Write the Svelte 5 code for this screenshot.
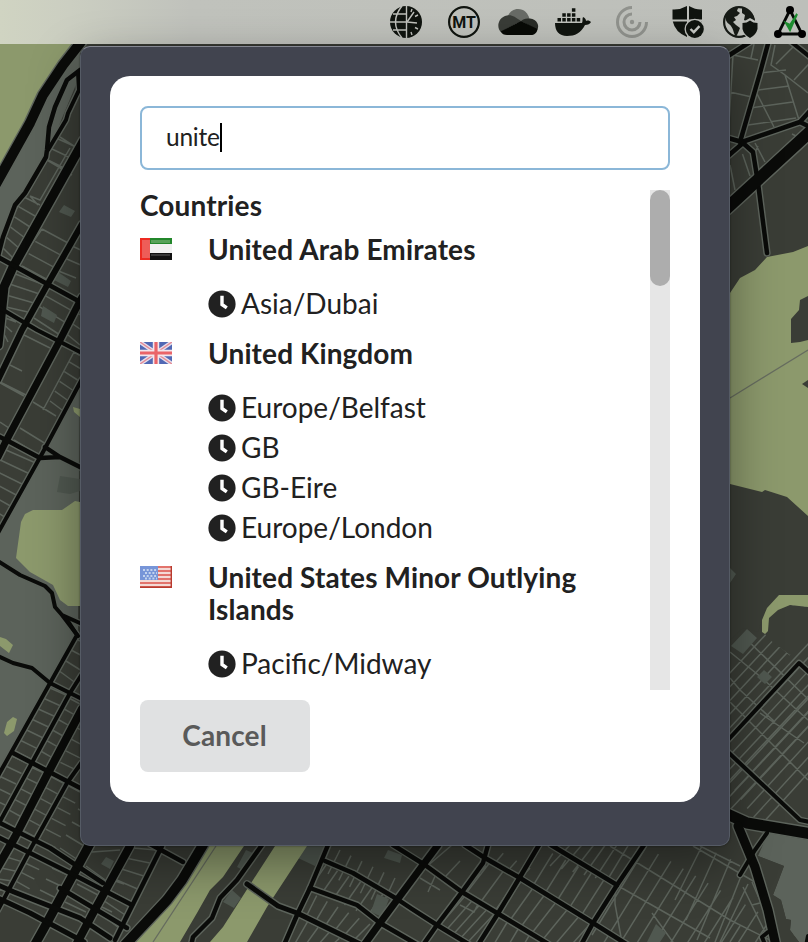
<script>
  const countries = [
    { name: 'United Arab Emirates', flag: 'ae', zones: ['Asia/Dubai'] },
    { name: 'United Kingdom', flag: 'gb', zones: ['Europe/Belfast', 'GB', 'GB-Eire', 'Europe/London'] },
    { name: 'United States Minor Outlying Islands', flag: 'us', zones: ['Pacific/Midway'] }
  ];

  // Evenly spaced streets running between edge a-b and edge c-d
  function ladder([ax, ay, bx, by, cx, cy, dx, dy, n]) {
    let d = '';
    for (let i = 0; i <= n; i++) {
      const t = i / n;
      d += `M${(ax + (bx - ax) * t).toFixed(1)} ${(ay + (by - ay) * t).toFixed(1)}L${(cx + (dx - cx) * t).toFixed(1)} ${(cy + (dy - cy) * t).toFixed(1)}`;
    }
    return d;
  }

  const streets = [
    // upper west blocks
    [22, 196, 3, 248, 40, 205, 15, 260, 5],
    [46, 159, 56, 138, 66, 169, 76, 147, 2],
    [42, 229, 22, 266, 68, 243, 48, 280, 3],
    [10, 272, 2, 318, 42, 284, 26, 322, 4],
    [50, 284, 34, 318, 77, 298, 60, 335, 3],
    [76, 232, 56, 270, 92, 240, 76, 278, 3],
    [24, 335, 0, 382, 50, 348, 26, 395, 1],
    [74, 352, 50, 401, 88, 360, 62, 410, 5],
    [20, 428, 14, 440, 46, 444, 40, 456, 1],
    [0, 316, 0, 326, 16, 322, 8, 342, 2],
    [6, 450, -26, 512, 38, 464, 2, 530, 6],
    [76, 300, 62, 330, 100, 310, 80, 345, 3],
    // lower west blocks
    [78, 640, 54, 682, 96, 648, 68, 694, 4],
    [50, 688, 15, 751, 66, 695, 31, 759, 6],
    [69, 698, 34, 761, 80, 704, 46, 768, 6],
    [82, 716, 55, 774, 100, 726, 68, 780, 5],
    [12, 756, -22, 818, 27, 763, -6, 826, 6],
    [31, 767, 2, 820, 44, 773, 16, 828, 5],
    [50, 776, 22, 830, 65, 784, 37, 838, 5],
    [69, 786, 40, 840, 80, 792, 56, 848, 5],
    [84, 796, 60, 848, 106, 806, 78, 860, 4],
    [12, 846, -20, 900, 27, 852, 0, 900, 5],
    [30, 854, 8, 900, 44, 860, 20, 908, 5],
    [52, 868, 28, 912, 70, 876, 44, 921, 4],
    [92, 852, 86, 866, 120, 850, 108, 882, 1],
    [133, 848, 96, 910, 156, 850, 119, 928, 6],
    [77, 884, 65, 902, 98, 895, 86, 912, 2],
    [112, 880, 98, 905, 124, 884, 112, 912, 2],
    // southern blocks
    [340, 850, 395, 878, 328, 874, 382, 906, 5],
    [326, 865, 395, 899, 310, 888, 379, 922, 6],
    [306, 890, 370, 924, 296, 914, 350, 944, 6],
    [297, 916, 350, 944, 285, 942, 330, 958, 5],
    [440, 848, 480, 874, 427, 865, 463, 889, 2],
    [452, 845, 486, 866, 425, 868, 459, 892, 1],
    [491, 861, 518, 878, 467, 892, 495, 911, 2],
    [490, 846, 530, 868, 480, 858, 520, 879, 3],
    [465, 896, 495, 913, 440, 925, 468, 942, 4],
    [540, 847, 617, 886, 521, 878, 594, 922, 6],
    [522, 880, 591, 923, 499, 914, 565, 952, 6],
    [572, 843, 640, 845, 550, 866, 618, 884, 6],
    [646, 847, 820, 948, 592, 935, 760, 1040, 14],
    [496, 916, 564, 952, 480, 942, 550, 978, 6],
    // north east
    [733, 55, 762, 60, 728, 140, 738, 142, 1],
    [760, 73, 748, 125, 786, 70, 796, 118, 3],
    [776, 64, 812, 96, 796, 44, 830, 75, 2],
    [730, 165, 755, 143, 735, 190, 765, 162, 2],
    [758, 146, 792, 134, 753, 157, 800, 138, 1],
    // south east grid
    [728, 675, 728, 812, 812, 585, 812, 722, 10],
    [728, 782, 760, 826, 812, 692, 840, 738, 5],
    [702, 846, 745, 866, 675, 900, 708, 960, 3]
  ];

  const minor = [
    'M42 157L72 175M60 137L80 150M70 148L40 200L30 196M38 205L30 196',
    'M22 258L42 229M10 365L22 371M0 383L24 396M33 402L56 416M74 352L43 410M0 422L12 430',
    'M730 92L756 98M754 44L751 58M733 55L758 60M775 45L771 65L785 75L799 120M785 75L808 93M753 86L774 127',
    'M615 885L615 904L621 937M652 913L675 945',
    'M610 846L730 920L790 950M620 887L710 938M693 846L760 885M700 846L740 866',
    'M730 652L762 678L808 720M743 636L808 699M730 702L808 780M768 635L790 655M760 713L804 743M730 678L740 690L775 722',
    'M743 887L765 932M752 882L762 905M748 884L720 942M752 905L760 903M740 926L730 942',
    'M425 868L459 888M420 878L440 890M436 874L428 892M460 905L474 912L480 900'
  ];

  const roads = [
    [10, 'M81 42L63 65L43 95L30 123L-4 184'],
    [4.5, 'M80 70L67 80L55 107L49 127L47 150L46 157L25 193L15 205L3 237L-2 256'],
    [4, 'M78 73L79 90L68 113L66 120L48 150'],
    [9, 'M84 140L13 267L4 287L-2 345'],
    [6, 'M82 224L50 280L22 330L-2 380'],
    [7, 'M82 297L60 340L5 443L-2 457'],
    [4, 'M82 379L43 452L-2 533'],
    [4.5, 'M-2 257L82 303'],
    [4, 'M-2 307L37 330L82 353'],
    [4.5, 'M-2 436L10 442L40 458L60 457L82 468M45 447L60 457'],
    [4, 'M-2 561L20 575L45 586L52 593L55 607L62 615L82 624M62 615L78 636'],
    [4, 'M-2 656L13 663L32 668L50 683L84 700'],
    [4, 'M66 618L77 635L-2 776'],
    [4, 'M82 674L70 693L-2 825'],
    [8, 'M82 709L48 773L15 837L-4 870'],
    [4, 'M82 762L67 783L30 850L-2 910'],
    [4.5, 'M13 753L84 790'],
    [9, 'M92 840L43 930L34 946'],
    [4.5, 'M-2 822L20 833L50 848L103 883'],
    [4.5, 'M-2 837L80 878L132 905'],
    [5, 'M-2 898L30 913L84 942M-2 885L14 892L80 918L110 938'],
    [8, 'M130 846L93 913L76 945'],
    [4.5, 'M162 846L115 940M150 844L183 862'],
    [4.5, 'M60 888L127 928'],
    [10, 'M203 845L182 880L167 900L125 945'],
    [4.5, 'M262 845L237 880L220 898L212 918L193 937L191 946'],
    [5, 'M247 884L278 906L297 913L360 944'],
    [4.5, 'M328 845L310 888L297 915L284 945'],
    [4.5, 'M325 861L353 873L397 899L412 909L437 925L470 945'],
    [4.5, 'M310 888L357 905L380 923L418 945'],
    [7, 'M438 845L423 865L380 923L364 945'],
    [4.5, 'M393 845L425 865L462 892L497 913L550 945'],
    [4.5, 'M465 845L485 858L520 878L593 923L628 945'],
    [4.5, 'M551 845L617 885'],
    [4.5, 'M644 845L617 885L593 923L581 945'],
    [4.5, 'M539 845L520 877L497 915L478 945'],
    [4.5, 'M488 845L483 863L462 892L437 925L423 945'],
    [4.5, 'M769 40L760 73L740 142M750 42L728 56'],
    [4.5, 'M728 138L742 142L800 122L810 111M743 143L728 156M800 122L810 127'],
    [4.5, 'M743 143L753 152L758 183L767 253'],
    [12, 'M812 130L726 209'],
    [4, 'M790 41L810 57'],
    [4, 'M728 740L799 663L810 673'],
    [4, 'M728 752L800 820L810 822'],
    [11, 'M725 813L747 823L812 834'],
    [9, 'M738 826L755 867L768 910L776 946'],
    [4, 'M767 833L755 850L740 875'],
    [4, 'M764 942L762 937L768 932M806 946L808 936']
  ];
</script>

<div class="desktop">
  <svg class="map" width="808" height="942" viewBox="0 0 808 942" aria-hidden="true">
    <rect width="808" height="942" fill="#3a3d36" />
    <path d={streets.map(ladder).join('') + minor.join('')} fill="none" stroke="#5d645c" stroke-width="1.5" />
    <g fill="#5c635b">
      <path d="M0 175L80 44L80 75L46 157L0 240Z" />
      <path d="M80 382L43 452L0 530V773L50 683L78 635Z" />
      <path d="M768 833L808 840V942H799L790 930L791 920L786 919L781 900L773 895L784 866L758 856Z" />
    </g>
    <g fill="#3a3d36">
      <path d="M730 215L808 146V250H730ZM730 480H808V600H780L765 610L758 632L743 628L730 640Z" />
      <path d="M765 634L768 631L769 618L778 610L790 605L808 607V634L790 655L770 640Z" />
      <path d="M758 856L784 866L773 895L781 900L786 919L791 920L790 930L799 942H776L768 910Z" />
      <path d="M203 846H328L285 942H140Z" />
    </g>
    <g fill="#505850">
      <path d="M64 205L75 211L71 217L59 212ZM58 272L71 281L68 287L54 280ZM43 306L57 315L54 323L41 316ZM60 476L80 479V491L70 494L57 492Z" />
      <path d="M106 857L114 861L110 869L101 864ZM303 846H325L315 866L298 858ZM246 850L253 853L243 870L237 867ZM232 890L241 898L234 908L223 902ZM388 850L402 855L400 863L384 858ZM377 894L389 899L382 917L371 912Z" />
      <path d="M747 629L757 638L743 654L731 646ZM764 670L772 677L765 684L757 677ZM730 568L736 574L730 583ZM656 924L666 933L660 942H647Z" />
    </g>
    <g fill="#8c996c">
      <path d="M0 44H72L55 68L38 95L25 123L0 170Z" />
      <path d="M33 510H62L75 501L80 502V606H68L60 600L53 585L30 572L16 558L21 522L25 514Z" />
      <path d="M73 407L80 409V417L74 412ZM0 637L6 639L13 645L9 653L0 646ZM13 717L17 719L14 731L7 736L4 733L7 722Z" />
      <path d="M205 846H244L223 877L210 890L197 913L180 942H135L168 902ZM275 846H307L267 907L247 942H210L223 927L253 880Z" />
      <path d="M730 293L740 278L755 270L767 257L793 252L808 246V296L800 300L799 310L791 319V343L800 342L808 340V380L802 384L808 388V516L787 497L765 490L762 492L730 484Z" />
      <path d="M808 595H779L767 608L762 620V632L765 634L768 631L769 618L778 610L790 605L808 607Z" />
    </g>
    <path d="M216 846L153 942M730 398L808 350" stroke="#666c5f" stroke-width="1.3" fill="none" />
    <g fill="none" stroke="#5d645c" stroke-linecap="round" stroke-linejoin="round">
      {#each roads as [w, d]}<path {d} stroke-width={w + 2.8} />{/each}
    </g>
    <g fill="none" stroke="#0a0b09" stroke-linecap="round" stroke-linejoin="round">
      {#each roads as [w, d]}<path {d} stroke-width={w} />{/each}
    </g>
  </svg>

  <header class="menubar">
    <svg width="32" height="32" viewBox="0 0 32 32">
      <circle cx="16" cy="16" r="16" fill="#10140f" />
      <g fill="none" stroke="#bfc0bb" stroke-width="1.4">
        <path d="M16.5 0V32M0 16H16M3 8H16M3 24H16M12 0Q-1 16 12 32" />
        <path d="M17 16L24 6M17 16L27 17M22 3L21 6M28 9L25 10.5M28 23L25 21.5M22 29L21 26" />
      </g>
    </svg>
    <svg class="mt" width="32" height="32" viewBox="0 0 32 32">
      <circle cx="16" cy="16" r="14.9" fill="none" stroke="#10140f" stroke-width="2.2" />
      <text x="16" y="21.6" text-anchor="middle">MT</text>
    </svg>
    <svg class="cloud" width="40" height="27" viewBox="0 0 40 27">
      <path d="M9 9C11 3 15 0 20 0C26 0 30 4 31.5 10L22 15Z" fill="#686b66" />
      <path d="M3 23C-2 19 0 8 9 6.5C14 5.5 17 8 23 12Z" fill="#393c37" />
      <path d="M23 12C26 9.500 29 9.500 32 9.500C39 10 42 17 39 21Z" fill="#292c27" />
      <path d="M2.500 22.500L23 12L39.500 20C39 24 36 26 33 26H9C6 26 4 25 2.500 22.500Z" fill="#080a06" />
    </svg>
    <svg class="docker" width="36" height="28" viewBox="0 0 36 28" fill="#10140f">
      <path d="M0 15H27C28 13 27 11 28 9C30 10 31 11 31 13C33 12 35 13 36 14C35 16 33 17 30 17C26 25 20 28 12 28C4 28 0 23 0 15Z" />
      <path d="M2.5 10H6V13.5H2.5ZM7.3 10H10.8V13.5H7.3ZM12.1 10H15.6V13.5H12.1ZM16.900 10H20.4V13.5H16.900ZM21.7 10H25.2V13.5H21.7ZM7.3 5.2H10.8V8.7H7.3ZM12.1 5.2H15.6V8.7H12.1ZM16.900 5.2H20.4V8.7H16.900ZM16.900 .3H20.4V3.8H16.900Z" />
    </svg>
    <svg class="swirl" width="32" height="32" viewBox="0 0 32 32">
      <circle cx="16" cy="16" r="2.2" fill="#90928d" />
      <path d="M16 1.5A14.5 14.5 0 1 0 30.5 16M16 8A8 8 0 1 0 24 16" fill="none" stroke="#90928d" stroke-width="3" />
    </svg>
    <svg class="shield" width="32" height="32" viewBox="0 0 32 32">
      <path d="M15 0Q8 4 .5 3.5V13.5H15ZM17 0Q24 4 30 3.5V13.5H17ZM.8 15.5H15V31Q3 26 .8 15.5ZM17 15.5H30L26 26L17 31Z" fill="#10140f" />
      <circle cx="22.8" cy="23" r="10.3" fill="#bdbfba" />
      <circle cx="22.8" cy="23" r="9" fill="#10140f" />
      <path d="M18.5 23L21.8 26.2L27.5 20.2" fill="none" stroke="#c5c7c2" stroke-width="2.4" />
    </svg>
    <svg class="earth" width="36" height="32" viewBox="0 0 36 32">
      <circle cx="17" cy="16" r="14.900" fill="none" stroke="#171b16" stroke-width="2.2" />
      <path d="M3 9L10 2L16 2L15 5L18 7L15 10L12 11L14 14L11 16L14 19L18 22L16 27L14 31C11 27 12 22 7 18C3 15 4 12 3 9ZM20 2C28 3 32 9 33 15L29 13L26 16L22 14L23 9L20 7Z" fill="#171b16" />
      <path d="M28 12L37 17V25Q34 31 28 33Q21 29 19 24V17Z" fill="#bdbfba" />
      <path d="M28 14.5Q31 17 35.5 17V23Q34 29 28 32Q22 29 20.5 23V17Q25 17 28 14.5Z" fill="#10140f" />
    </svg>
    <svg class="graph" width="32" height="32" viewBox="0 0 32 32">
      <path d="M16 4L4 28H28Z" fill="none" stroke="#050705" stroke-width="2.8" />
      <path d="M12 17L16 24L23 8L20 13L16 19Z" fill="#1c8c2e" stroke="#1c8c2e" stroke-width="2" />
      <circle cx="16" cy="4" r="4" /><circle cx="4" cy="28" r="4" /><circle cx="28" cy="28" r="4" />
    </svg>
  </header>

  <main class="window">
    <section class="card">
      <div class="search">unite<span class="caret"></span></div>
      <div class="results">
        <div class="list">
          <h2>Countries</h2>
          {#each countries as country}
            <div class="country">
              <svg class="flag" width="32" height="22" viewBox="0 0 32 22">
                {#if country.flag === 'ae'}
                  <rect width="32" height="22" fill="#f1f1f1" />
                  <path d="M10 0H32V6H10Z" fill="#23872b" /><path d="M11 2H30V5H11Z" fill="#57a259" />
                  <path d="M10 15H32V22H10Z" fill="#111" /><path d="M11 16H30V18H11Z" fill="#373737" />
                  <path d="M0 0H10V22H0Z" fill="#ed2b22" /><path d="M2 2H10V20H2Z" fill="#ee5d58" />
                {:else if country.flag === 'gb'}
                  <rect width="32" height="22" fill="#5168b4" />
                  <path d="M0 0L32 22M32 0L0 22" stroke="#e6dfec" stroke-width="4" />
                  <path d="M0 0L32 22M32 0L0 22" stroke="#e58a94" stroke-width="1.4" />
                  <path d="M16 0V22M0 11H32" stroke="#f3e6ec" stroke-width="6.4" />
                  <path d="M16 0V22M0 11H32" stroke="#ea6469" stroke-width="3.2" />
                {:else}
                  <rect width="32" height="22" fill="#f4d9d5" />
                  <path d="M0 1H32M0 5H32M0 9H32M0 13H32M0 17H32M0 21H32" stroke="#e2736c" stroke-width="1.8" />
                  <path d="M31.300 0V22M0 21.300H32" stroke="#b83a2e" stroke-width="1.4" />
                  <rect width="18" height="14" fill="#7795d8" />
                  <path d="M3 4H17M5 7H17M3 10H17M5 12.5H17" stroke="#c3d3ee" stroke-width="1.8" stroke-dasharray="2 1.7" />
                {/if}
              </svg>
              <div class="details">
                <h3>{country.name}</h3>
                <ul>
                  {#each country.zones as zone}
                    <li>
                      <svg width="28" height="28" viewBox="0 0 28 28">
                        <circle cx="14" cy="14" r="13.6" fill="#212121" />
                        <path d="M14 5.7V14.5L18.8 17.900" fill="none" stroke="#fff" stroke-width="3.4" />
                      </svg>
                      <span>{zone}</span>
                    </li>
                  {/each}
                </ul>
              </div>
            </div>
          {/each}
        </div>
        <div class="track"><div class="thumb"></div></div>
      </div>
      <button>Cancel</button>
    </section>
  </main>
</div>

<style>
  :global(body) { margin: 0; }
  .desktop {
    position: relative;
    width: 808px;
    height: 942px;
    overflow: hidden;
    font-family: Lato, "Liberation Sans", sans-serif;
    color: #212121;
  }
  .map { position: absolute; inset: 0; }
  .menubar {
    position: relative;
    display: flex;
    justify-content: flex-end;
    align-items: center;
    box-sizing: border-box;
    height: 44px;
    padding-right: 2px;
    background: linear-gradient(90deg, #d0d4c2 0, #cbcec1 70px, #c0c2bc 190px, #bdbfba 100%);
  }
  .menubar svg { display: block; flex: none; overflow: visible; }
  .mt { margin-left: 26px; }
  .mt text { font: bold 16px Roboto, "Liberation Sans", sans-serif; fill: #10140f; }
  .cloud { margin-left: 18px; }
  .docker { margin-left: 17px; }
  .swirl { margin-left: 25px; }
  .shield { margin-left: 24px; }
  .earth { margin-left: 18px; }
  .graph { margin-left: 16px; }
  .window {
    position: relative;
    box-sizing: border-box;
    width: 650px;
    height: 800px;
    margin: 2px 0 0 80px;
    padding: 29px;
    border: 1px solid #555b65;
    border-top-color: #858892;
    border-radius: 10px;
    background: #41444f;
    box-shadow: 0 0 2px rgba(0, 0, 0, .5), 0 18px 50px rgba(0, 0, 0, .4);
  }
  .card {
    box-sizing: border-box;
    height: 726px;
    padding: 30px;
    border-radius: 20px;
    background: #fff;
  }
  .search {
    display: flex;
    align-items: center;
    box-sizing: border-box;
    height: 64px;
    padding: 0 24px 3px;
    border: 2px solid #8bb7d8;
    border-radius: 8px;
    font-size: 24.5px;
    letter-spacing: -.25px;
  }
  .caret { width: 2px; height: 29px; margin-top: 1px; background: #000; }
  .results { display: flex; height: 500px; margin-top: 20px; }
  .list { flex: 1; overflow: hidden; }
  h2, h3 { position: relative; top: -1px; margin: 0; font-size: 28px; line-height: 32px; font-weight: 700; letter-spacing: .13px; }
  .country { display: flex; align-items: flex-start; margin-top: 12px; }
  .country + .country { margin-top: 18px; }
  .flag { flex: none; margin: 4px 36px 0 0; }
  .details { flex: 1; }
  ul { display: flex; flex-direction: column; gap: 8px; margin: 22px 0 0; padding: 0; list-style: none; }
  li { display: flex; align-items: center; gap: 5px; height: 32px; font-size: 28px; line-height: 32px; }
  li span { padding-bottom: 2px; }
  li svg { margin-bottom: 1px; }
  .track { width: 20px; background: #e6e6e6; }
  .thumb { height: 96px; border-radius: 10px; background: #adadad; }
  button {
    display: block;
    width: 170px;
    height: 72px;
    margin-top: 10px;
    padding: 0 1px 2px 0;
    border: 0;
    border-radius: 8px;
    background: #e0e1e2;
    color: #5a5a5a;
    font: 700 28px Lato, sans-serif;
    letter-spacing: .13px;
  }
</style>
